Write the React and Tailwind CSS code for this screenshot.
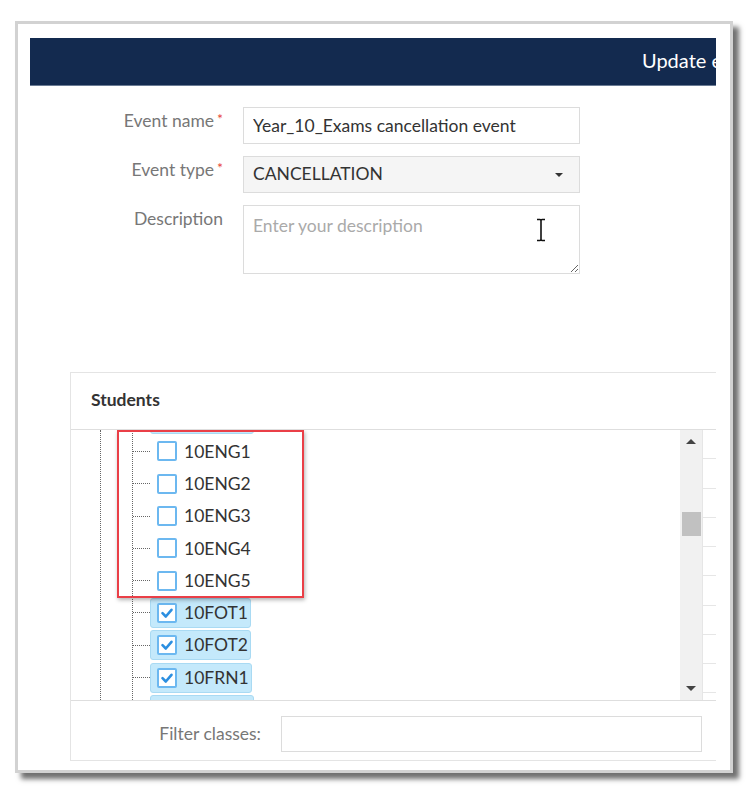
import { useState } from "react";

const rows = [
  { name: "10DRA1", on: true },
  { name: "10ENG1", on: false },
  { name: "10ENG2", on: false },
  { name: "10ENG3", on: false },
  { name: "10ENG4", on: false },
  { name: "10ENG5", on: false },
  { name: "10FOT1", on: true },
  { name: "10FOT2", on: true },
  { name: "10FRN1", on: true },
  { name: "10GEO1", on: true },
];

const Check = ({ on }) => (
  <span className="w-[20px] h-[20px] border-2 border-[#6cb8f0] rounded-[2px] bg-white flex items-center justify-center shrink-0">
    {on && (
      <svg width="14" height="14" viewBox="0 0 14 14">
        <path d="M2.5 7.2 L5.8 10.5 L11.5 3.8" fill="none" stroke="#2c8fe0" strokeWidth="2.6" strokeLinecap="round" strokeLinejoin="round" />
      </svg>
    )}
  </span>
);

const Label = ({ text, req }) => (
  <div className="text-right text-[17.5px] text-[#777] pt-[1px] whitespace-nowrap">
    {text}
    {req && <span className="text-[#e8453c] text-[14px] align-top ml-[3px]">*</span>}
  </div>
);

const App = () => {
  const [name, setName] = useState("Year_10_Exams cancellation event");
  return (
    <div className="w-[752px] h-[797px] bg-white pt-[21px] pl-[15px] font-['Lato','Noto_Sans',sans-serif]">
      <div className="w-[718px] h-[752px] border-[3px] border-[#d2d2d2] bg-white shadow-[6px_6px_5px_#707070] pl-[12px] pt-[14px]">
        <div className="w-[686px] h-[732px] overflow-hidden">
          <div className="h-[48px] bg-[#132a4f] border-b border-[#6a7b94] flex items-center pb-[4px] pl-[612px] text-white text-[20px] whitespace-nowrap">
            Update event
          </div>

          <div className="mt-[21px] grid grid-cols-[193px_337px] gap-x-[20px] gap-y-[12px]">
            <Label text="Event name" req />
            <input
              value={name}
              onChange={(e) => setName(e.target.value)}
              className="h-[37px] border border-[#dcdcdc] px-[9px] text-[17.5px] text-[#333] outline-none"
            />
            <Label text="Event type" req />
            <div className="h-[37px] border border-[#dcdcdc] bg-[#f5f5f5] px-[9px] flex items-center justify-between text-[17.5px] text-[#333]">
              <span>CANCELLATION</span>
              <span className="w-0 h-0 border-l-[4px] border-r-[4px] border-t-[4px] border-l-transparent border-r-transparent border-t-[#333] mr-[7px]" />
            </div>
            <Label text="Description" />
            <div className="relative">
              <textarea
                placeholder="Enter your description"
                className="w-[337px] h-[69px] block border border-[#dcdcdc] px-[9px] pt-[7px] text-[17.5px] text-[#333] placeholder:text-[#aaa] outline-none resize-y"
              />
              <svg className="absolute left-[292px] top-[13px]" width="12" height="24" viewBox="0 0 12 24">
                <path d="M2 1.5 H5 Q6 1.5 6 3 V21 Q6 22.5 5 22.5 H2 M10 1.5 H7 Q6 1.5 6 3 M10 22.5 H7 Q6 22.5 6 21" fill="none" stroke="#111" strokeWidth="1.6" />
              </svg>
            </div>
          </div>

          <div className="mt-[98px] ml-[40px] w-[700px] border border-[#e4e4e4]">
            <div className="h-[57px] flex items-center pl-[20px] pb-[2px] font-bold text-[17.5px] text-[#333] border-b border-[#dedede]">
              Students
            </div>

            <div className="h-[270px] flex">
              <div className="w-[609px] h-full relative overflow-hidden">
                <div className="h-full pl-[29px]">
                  <div className="h-full border-l border-dotted border-[#666] pl-[31px]">
                    <div className="h-full border-l border-dotted border-[#666] flex flex-col">
                      <div className="-mt-[27px]">
                        {rows.map((r) => (
                          <div key={r.name} className="h-[32.3px] flex items-center">
                            <span className="w-[17px] border-t border-dotted border-[#666]" />
                            <div
                              className={
                                r.on
                                  ? "h-[30px] flex items-center gap-[7px] pl-[6px] pr-[2px] rounded-[3px] bg-[#c4e9fb] border border-[#a9daf3]"
                                  : "h-[30px] flex items-center gap-[7px] pl-[6px] pr-[2px] rounded-[3px] border border-transparent"
                              }
                            >
                              <Check on={r.on} />
                              <span className="text-[17.5px] text-[#333] leading-none">{r.name}</span>
                            </div>
                          </div>
                        ))}
                      </div>
                    </div>
                  </div>
                </div>
                <div className="absolute left-[46px] top-0 w-[187px] h-[168px] border-2 border-[#ea3f47] shadow-[1px_2px_4px_rgba(0,0,0,0.3)]" />
              </div>

              <div className="w-[22px] h-full bg-[#f1f1f1] flex flex-col items-center justify-between py-[9px] relative">
                <span className="w-0 h-0 border-l-[5px] border-r-[5px] border-b-[5px] border-l-transparent border-r-transparent border-b-[#444]" />
                <span className="absolute left-[2px] top-[82px] w-[19px] h-[24px] bg-[#c1c1c1]" />
                <span className="w-0 h-0 border-l-[5px] border-r-[5px] border-t-[5px] border-l-transparent border-r-transparent border-t-[#444]" />
              </div>

              <div className="flex-1 border-l border-[#e6e6e6]">
                {Array.from({ length: 9 }).map((_, i) => (
                  <div key={i} className="h-[29.25px] border-b border-[#e6e6e6]" />
                ))}
              </div>
            </div>

            <div className="border-t border-[#dedede] pt-[15px] pb-[8px] flex items-center">
              <div className="w-[190px] text-right text-[17.5px] text-[#777]">Filter classes:</div>
              <input className="ml-[20px] w-[421px] h-[36px] border border-[#dcdcdc] outline-none" />
            </div>
          </div>
        </div>
      </div>
    </div>
  );
};

export default App;
